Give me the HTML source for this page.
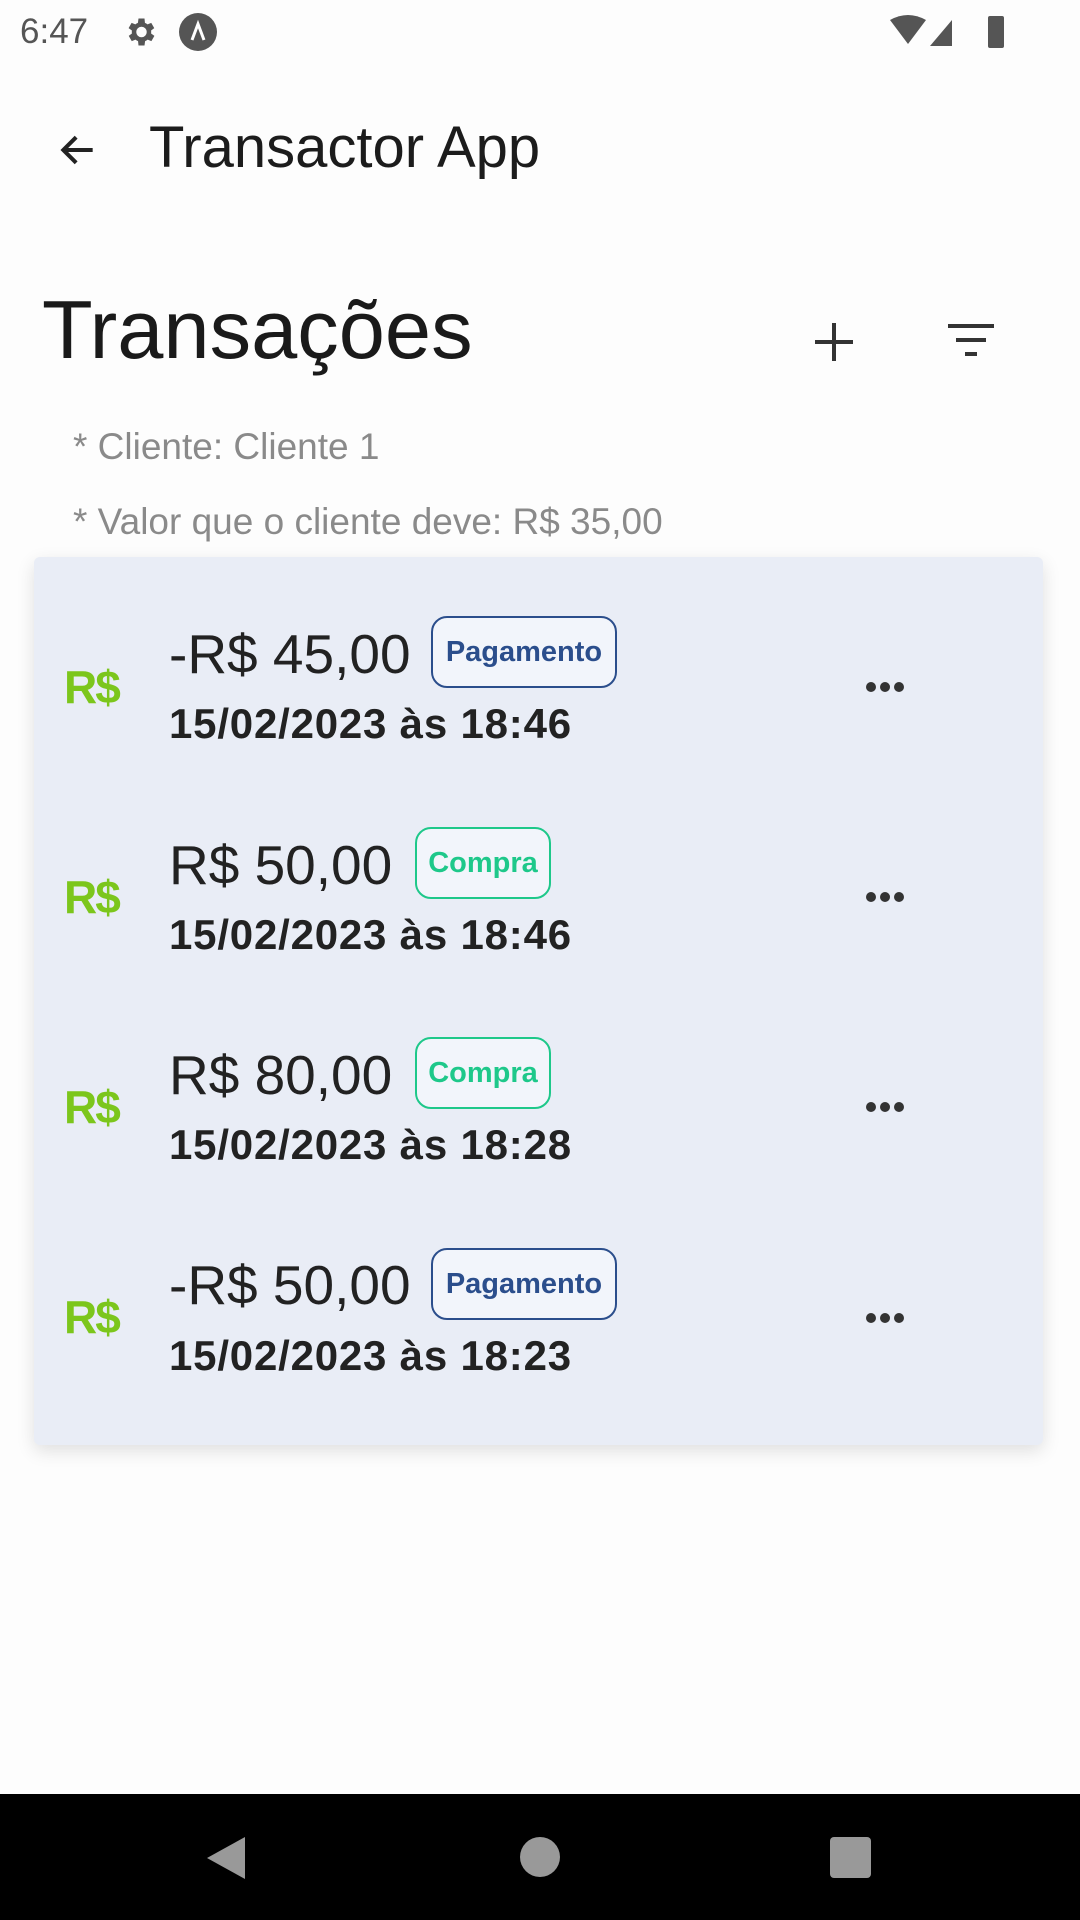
<!DOCTYPE html>
<html><head><meta charset="utf-8"><style>
*{margin:0;padding:0;box-sizing:border-box}
body{width:1080px;height:1920px;background:#fdfdfd;font-family:"Liberation Sans",sans-serif;position:relative;overflow:hidden;color:#1a1a1a}
.a{position:absolute;white-space:nowrap}
.card{position:absolute;left:34px;top:557px;width:1009px;height:888px;background:#e9edf6;border-radius:6px;box-shadow:0 6px 18px rgba(0,0,0,.12)}
.rs{position:absolute;left:64px;font-size:46px;font-weight:bold;color:#7cc61c;letter-spacing:-2px}
.amt{position:absolute;left:169px;font-size:55px;color:#222}
.dt{position:absolute;left:169px;font-size:42px;font-weight:bold;color:#222;letter-spacing:0.8px}
.bd{position:absolute;height:72px;border:2px solid;border-radius:16px;font-size:29px;font-weight:bold;display:flex;align-items:center;justify-content:center;background:#f2f5fb}
.pg{border-color:#2b4e8c;color:#2b4e8c;width:186px}
.cp{border-color:#1ec88a;color:#1ec88a;width:136px}
.dots{position:absolute;left:866px;width:42px;height:10px}
.dots i{display:inline-block;width:10px;height:10px;border-radius:50%;background:#333;margin-right:4px}
</style></head><body>
<div class="a" style="left:20px;top:12px;font-size:35px;color:#555">6:47</div>
<svg class="a" style="left:122px;top:14px" width="36" height="36" viewBox="0 0 24 24"><path fill="#555" d="M19.4 13a7.5 7.5 0 000-2l2.1-1.6-2-3.5-2.5 1a7 7 0 00-1.7-1L15 3h-4l-.4 2.9a7 7 0 00-1.7 1l-2.5-1-2 3.5L6.6 11a7.5 7.5 0 000 2l-2.1 1.6 2 3.5 2.5-1a7 7 0 001.7 1L11 21h4l.4-2.9a7 7 0 001.7-1l2.5 1 2-3.5zM13 15.5a3.5 3.5 0 110-7 3.5 3.5 0 010 7z"/></svg>
<svg class="a" style="left:178px;top:12px" width="40" height="40" viewBox="0 0 40 40"><circle cx="20" cy="20" r="19" fill="#555"/><path d="M14 28L20 12L26 28" stroke="#fff" stroke-width="3" fill="none"/></svg>
<svg class="a" style="left:890px;top:14px" width="120" height="36" viewBox="0 0 120 36"><path fill="#555" d="M0 6Q18-4 36 6L18 30Z"/><path fill="#555" d="M40 32L62 6V32Z"/><rect x="98" y="2" width="16" height="32" rx="2" fill="#555"/></svg>
<svg class="a" style="left:56px;top:128px" width="44" height="44" viewBox="0 0 24 24"><path d="M20 12H5M11 5l-7 7 7 7" stroke="#222" stroke-width="2.2" fill="none"/></svg>
<div class="a" style="left:149px;top:114px;font-size:58px;color:#1c1c1c">Transactor App</div>
<div class="a" style="left:42px;top:282px;font-size:83px;color:#1a1a1a">Transações</div>
<svg class="a" style="left:812px;top:320px" width="44" height="44" viewBox="0 0 44 44"><path d="M22 3V41M3 22H41" stroke="#333" stroke-width="4"/></svg>
<svg class="a" style="left:946px;top:322px" width="50" height="40" viewBox="0 0 50 40"><path d="M2 4H48M10 18H40M19 32H31" stroke="#333" stroke-width="4"/></svg>
<div class="a" style="left:73px;top:426px;font-size:37px;color:#8a8a8a">* Cliente: Cliente 1</div>
<div class="a" style="left:73px;top:501px;font-size:37px;color:#8a8a8a">* Valor que o cliente deve: R$ 35,00</div>
<div class="card"></div>

<div class="rs" style="top:660px">R$</div>
<div class="amt" style="top:622px">-R$ 45,00</div>
<div class="bd pg" style="left:431px;top:616px">Pagamento</div>
<div class="dt" style="top:700px">15/02/2023 às 18:46</div>
<div class="dots" style="top:679px"><i></i><i></i><i></i></div>

<div class="rs" style="top:870px">R$</div>
<div class="amt" style="top:833px">R$ 50,00</div>
<div class="bd cp" style="left:415px;top:827px">Compra</div>
<div class="dt" style="top:911px">15/02/2023 às 18:46</div>
<div class="dots" style="top:889px"><i></i><i></i><i></i></div>

<div class="rs" style="top:1080px">R$</div>
<div class="amt" style="top:1043px">R$ 80,00</div>
<div class="bd cp" style="left:415px;top:1037px">Compra</div>
<div class="dt" style="top:1121px">15/02/2023 às 18:28</div>
<div class="dots" style="top:1099px"><i></i><i></i><i></i></div>

<div class="rs" style="top:1290px">R$</div>
<div class="amt" style="top:1253px">-R$ 50,00</div>
<div class="bd pg" style="left:431px;top:1248px">Pagamento</div>
<div class="dt" style="top:1332px">15/02/2023 às 18:23</div>
<div class="dots" style="top:1310px"><i></i><i></i><i></i></div>

<div class="a" style="left:0;top:1794px;width:1080px;height:126px;background:#000"></div>
<svg class="a" style="left:205px;top:1836px" width="42" height="44" viewBox="0 0 42 44"><path d="M40 1V43L2 22Z" fill="#999"/></svg>
<div class="a" style="left:520px;top:1837px;width:40px;height:40px;border-radius:50%;background:#999"></div>
<div class="a" style="left:830px;top:1837px;width:41px;height:41px;border-radius:4px;background:#999"></div>
</body></html>
